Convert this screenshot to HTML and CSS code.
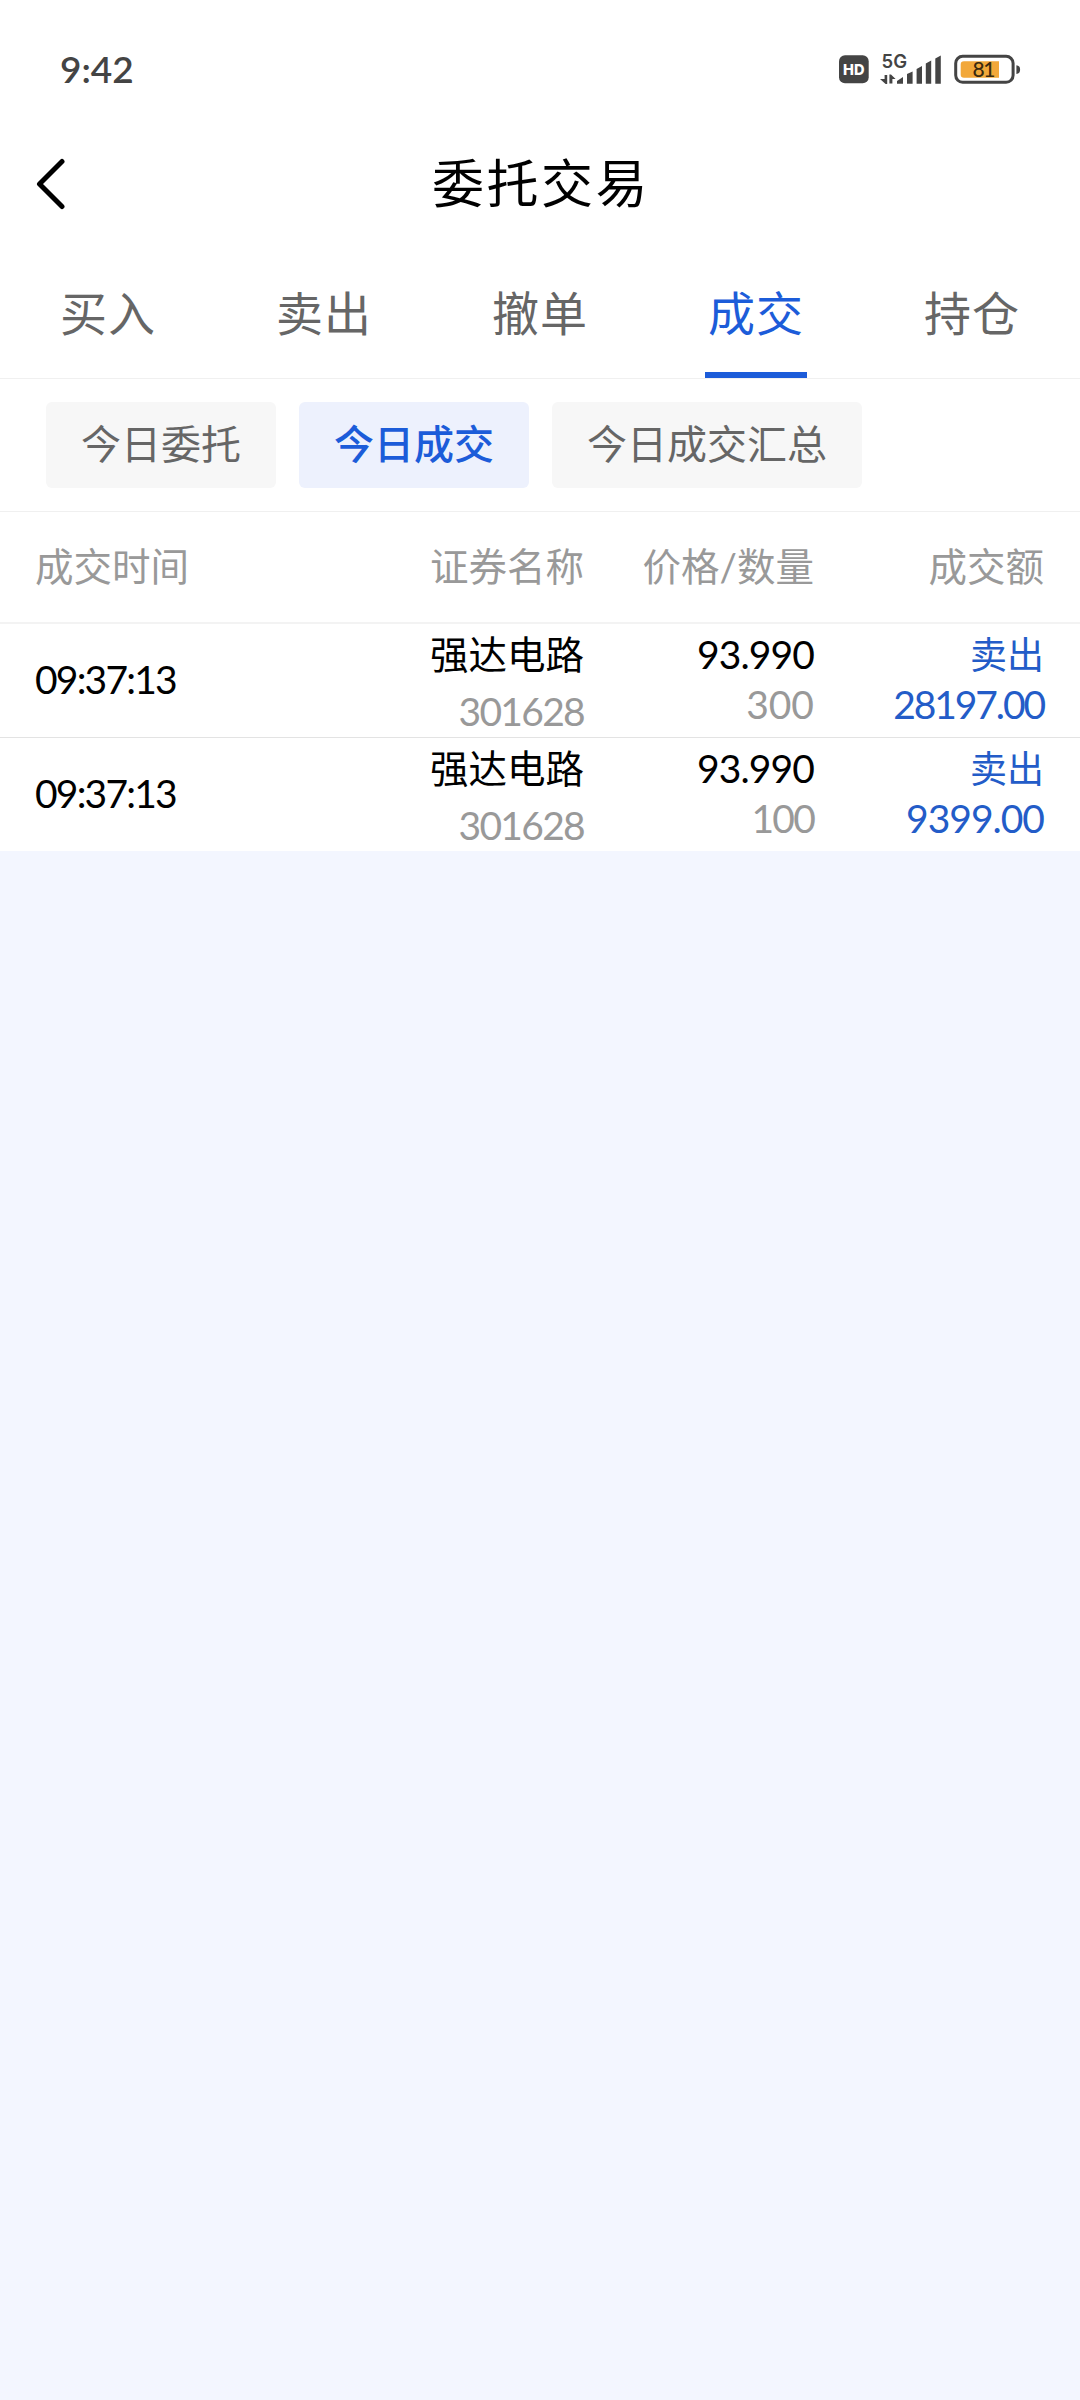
FILE: index.html
```html
<!DOCTYPE html>
<html lang="zh-CN">
<head>
<meta charset="utf-8">
<title>委托交易</title>
<link rel="stylesheet" href="styles.css">
</head>
<body>
<div class="top">
  <div class="status">
    <span class="clock">9:42</span>
    <svg class="status-icons" width="184" height="44" viewBox="838 48 184 44">
      <rect x="839" y="55.3" width="29.7" height="28" rx="6" fill="#444"/>
      <text x="843" y="74.800" class="hd" textLength="21.5" lengthAdjust="spacingAndGlyphs">HD</text>
      <text x="881.6" y="68" class="net" textLength="25.5" lengthAdjust="spacingAndGlyphs">5G</text>
      <g fill="#444">
        <path d="M884.600 75h2.600v9h-1.600l-5.600-5h4.600zM889.400 83.500v-9h1.600l4.600 4.600h-3.200v4.400z"/>
        <path d="M897 81l6-4v6.800h-6zM907 74l5.600-2.600v12.400H907zM916.600 69l5.400-3v17.800h-5.400zM925.800 63.600l5.400-3v23.200h-5.400zM935.300 58.400l5.500-3v28.400h-5.500z"/>
        <path d="M1016.400 65.200c2.600.3 3.700 1.500 3.700 4.400s-1.100 4.100-3.700 4.400z"/>
      </g>
      <rect x="955.700" y="56.300" width="57.400" height="26" rx="7" fill="#fff" stroke="#444" stroke-width="3"/>
      <path d="M964 61.200h35v16.600h-35a3.300 3.300 0 0 1-3.300-3.300v-10a3.300 3.300 0 0 1 3.300-3.300z" fill="#f2a83a"/>
      <text x="972.500" y="77.300" class="level" textLength="23">81</text>
    </svg>
  </div>
  <header class="titlebar">
    <svg class="back" width="30" height="52" viewBox="36 158 30 52"><path d="M62 161.500L39.500 184L62 206.500" fill="none" stroke="#000" stroke-width="5" stroke-linecap="round" stroke-linejoin="round"/></svg>
    <h1>委托交易</h1>
  </header>
  <nav class="tabs">
    <a class="tab">买入</a>
    <a class="tab">卖出</a>
    <a class="tab">撤单</a>
    <a class="tab active">成交</a>
    <a class="tab">持仓</a>
  </nav>
  <div class="chips">
    <a class="chip">今日委托</a>
    <a class="chip on">今日成交</a>
    <a class="chip">今日成交汇总</a>
  </div>
</div>
<main class="table">
  <div class="cols head">
    <span>成交时间</span><span>证券名称</span><span>价格/数量</span><span>成交额</span>
  </div>
  <div class="cols row">
    <span class="time">09:37:13</span>
    <div class="cell"><span class="name">强达电路</span><span class="code">301628</span></div>
    <div class="cell"><span class="num price">93.990</span><span class="num grey">300</span></div>
    <div class="cell blue"><span class="side">卖出</span><span class="num tight">28197.00</span></div>
  </div>
  <div class="cols row">
    <span class="time">09:37:13</span>
    <div class="cell"><span class="name">强达电路</span><span class="code">301628</span></div>
    <div class="cell"><span class="num price">93.990</span><span class="num grey hundred">100</span></div>
    <div class="cell blue"><span class="side">卖出</span><span class="num snug">9399.00</span></div>
  </div>
</main>
</body>
</html>
```

FILE: styles.css
```css
* { box-sizing: border-box; }
body {
  margin: 0;
  min-height: 2400px;
  background: #f3f6ff;
  color: #000;
  font-family: Lato, "Noto Sans CJK SC", sans-serif;
}
.top { background: #fff; }

.status {
  height: 130px;
  padding: 10px 58px 0 60px;
  display: flex;
  align-items: center;
  justify-content: space-between;
}
.clock { font-size: 37px; line-height: 40px; padding-bottom: 2px; font-weight: 600; color: #444; }
.status-icons { display: block; }
.hd { font: 800 15px Inter, sans-serif; fill: #fff; }
.net { font: 600 18.500px Inter, sans-serif; fill: #444; }
.level { font: 500 21px Lato, sans-serif; fill: #3a2a10; }

.titlebar {
  height: 108px;
  padding: 0 36px;
  display: grid;
  grid-template-columns: 30px 1fr 30px;
  align-items: center;
}
.back { display: block; }
.titlebar h1 {
  margin: 0;
  padding: 0 0 2px 2px;
  text-align: center;
  font-size: 52px;
  line-height: 80px;
  font-weight: 400;
  letter-spacing: 2.500px;
}

.tabs {
  height: 141px;
  display: grid;
  grid-template-columns: repeat(5, 1fr);
  justify-items: center;
  border-bottom: 1px solid #f0f0f0;
}
.tab {
  width: 102px;
  height: 140px;
  padding-top: 40px;
  text-align: center;
  font-size: 47px;
  line-height: 70px;
  letter-spacing: 1px;
  color: #666;
}
.tab.active { color: #1c5cd9; border-bottom: 6px solid #1c5cd9; }

.chips {
  height: 133px;
  padding: 23px 46px 0;
  display: flex;
  gap: 23px;
  border-bottom: 1px solid #f0f0f0;
}
.chip {
  height: 86px;
  padding: 0 35px;
  border-radius: 6px;
  background: #f7f7f7;
  color: #666;
  font-size: 40px;
  line-height: 84px;
}
.chip.on { background: #edf1fd; color: #1c5cd9; font-weight: 500; }

.table { background: #fff; }
.cols {
  padding: 0 36px 0 35px;
  display: grid;
  grid-template-columns: 1fr 275px 230px 230px;
}
.head {
  height: 112px;
  line-height: 109px;
  font-size: 38.500px;
  color: #999;
  border-bottom: 2px solid #f3f3f3;
}
.head span + span { text-align: right; }
.row { height: 114px; }
.row + .row { height: 113px; }
.row:not(:last-child) { border-bottom: 1px solid #e3e3e3; }
.time { font-size: 39px; line-height: 111px; letter-spacing: -1.800px; }
.cell {
  display: flex;
  flex-direction: column;
  align-items: flex-end;
  padding-top: 5px;
}
.name { font-size: 38.500px; line-height: 50px; }
.code { font-size: 39px; line-height: 50px; margin-top: 7px; color: #999; letter-spacing: -1.700px; }
.num, .side { font-size: 39px; line-height: 50px; }
.side { font-size: 37px; padding-top: 1px; margin-bottom: -1px; }
.price { letter-spacing: -.900px; }
.grey { color: #999; }
.hundred { letter-spacing: -1.800px; }
.blue { color: #235cc8; }
.tight { letter-spacing: -2.100px; }
.snug { letter-spacing: -1px; }
```
